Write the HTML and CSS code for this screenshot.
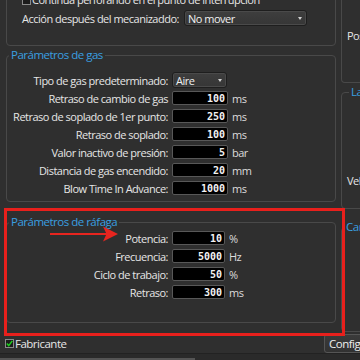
FILE: index.html
```html
<!DOCTYPE html>
<html>
<head>
<meta charset="UTF-8">
<link rel="stylesheet" href="styles.css">
</head>
<body>
<div class="window">
    <div class="columns">
        <div class="leftcol">
            <div class="group topgroup">
                <div class="checkrow"><span class="check"></span>Continúa perforando en el punto de interrupción</div>
                <div class="actionrow">
                    <span class="lbl">Acción después del mecanizaddo:</span>
                    <span class="combo wide">No mover<span class="arrow"></span></span>
                </div>
            </div>

            <fieldset class="group gas">
                <legend>Parámetros de gas</legend>
                <div class="form">
                    <span class="lbl">Tipo de gas predeterminado:</span><span class="combo">Aire<span class="arrow"></span></span><span></span>
                    <span class="lbl">Retraso de cambio de gas</span><input class="num" value="100"><span class="unit">ms</span>
                    <span class="lbl">Retraso de soplado de 1er punto:</span><input class="num" value="250"><span class="unit">ms</span>
                    <span class="lbl">Retraso de soplado:</span><input class="num" value="100"><span class="unit">ms</span>
                    <span class="lbl">Valor inactivo de presión:</span><input class="num" value="5"><span class="unit">bar</span>
                    <span class="lbl">Distancia de gas encendido:</span><input class="num" value="20"><span class="unit">mm</span>
                    <span class="lbl">Blow Time In Advance:</span><input class="num" value="1000"><span class="unit">ms</span>
                </div>
            </fieldset>

            <fieldset class="group burst">
                <legend>Parámetros de ráfaga</legend>
                <div class="form narrow">
                    <span class="lbl">Potencia:</span><input class="num" value="10"><span class="unit">%</span>
                    <span class="lbl">Frecuencia:</span><input class="num" value="5000"><span class="unit">Hz</span>
                    <span class="lbl">Ciclo de trabajo:</span><input class="num" value="50"><span class="unit">%</span>
                    <span class="lbl">Retraso:</span><input class="num" value="300"><span class="unit">ms</span>
                </div>
            </fieldset>
        </div>

        <div class="rightcol">
            <div class="group toppanel"><span class="side">Posición</span></div>
            <fieldset class="group lav">
                <legend>Lavado</legend>
                <span class="side">Velocidad</span>
            </fieldset>
            <fieldset class="group car">
                <legend>Carga</legend>
            </fieldset>
        </div>
    </div>

    <div class="bottomrow">
        <div class="fab"><span class="check on"><svg width="7" height="7" viewBox="0 0 7 7"><path d="M0.8 3.6 L2.7 5.6 L6.3 0.9" fill="none" stroke="#1ed21e" stroke-width="1.5"/></svg></span>Fabricante</div>
        <button class="btn">Configuración</button>
    </div>
    <div class="status"><span class="statusbar"></span></div>

    <div class="highlight"></div>
    <svg class="pointer" width="72" height="18" viewBox="0 0 72 18">
        <line x1="0" y1="9" x2="58" y2="9" stroke="#e8251f" stroke-width="2.2"/>
        <path d="M53 1.5 L68 9 L53 16.5 L56.5 9 Z" fill="#e8251f"/>
    </svg>
</div>
</body>
</html>
```

FILE: styles.css
```css
body {
    margin: 0;
    background-color: #2f2f2f;
    color: #e6e6e6;
    font-family: "Open Sans", "Noto Sans", sans-serif;
    font-size: 11px;
    letter-spacing: -0.5px;
    overflow: hidden;
}

.window {
    position: relative;
    width: 360px;
    height: 360px;
    overflow: hidden;
}

.columns {
    display: flex;
    height: 336px;
}

.leftcol {
    flex: none;
    width: 330px;
    margin-left: 6px;
}

.rightcol {
    flex: none;
    width: 90px;
    margin-left: 5px;
    display: flex;
    flex-direction: column;
}

.group {
    border: 1px solid #494949;
    border-radius: 4px;
    margin: 0;
    box-sizing: border-box;
}

fieldset.group {
    padding: 0;
    min-width: 0;
}

legend {
    color: #3a9fe0;
    margin-left: 2px;
    padding: 0 2px;
    line-height: 14px;
    font-size: 11.5px;
}

.lbl {
    white-space: nowrap;
}

/* top group, partly above the window */
.topgroup {
    margin-top: -12px;
    padding: 3px 0 17px 15px;
}

.checkrow {
    height: 16px;
    line-height: 16px;
    display: flex;
    align-items: center;
    white-space: nowrap;
}

.check {
    display: inline-flex;
    align-items: center;
    justify-content: center;
    width: 9px;
    height: 9px;
    box-sizing: border-box;
    border: 1px solid #8a8a8a;
    background-color: #1c1c1c;
    margin-right: 1px;
}

.actionrow {
    display: grid;
    grid-template-columns: 162px 123px;
    align-items: center;
    height: 20px;
}

.combo {
    position: relative;
    display: flex;
    align-items: center;
    box-sizing: border-box;
    height: 16px;
    width: 55px;
    padding-left: 3px;
    background: linear-gradient(#3e3e3e, #363636);
    border: 1px solid #1e1e1e;
    box-shadow: inset 0 0 0 1px #4a4a4a;
    border-radius: 3px;
    color: #f0f0f0;
}

.combo.wide {
    width: 123px;
}

.arrow {
    position: absolute;
    right: 4px;
    top: 6px;
    border-left: 2.5px solid transparent;
    border-right: 2.5px solid transparent;
    border-top: 3px solid #d0d0d0;
}

/* gas group */
.gas {
    margin-top: 2px;
    padding: 9px 0 4px 0 !important;
}

.burst {
    margin-top: 13px;
    padding: 0 0 21px 0 !important;
}

.form {
    display: grid;
    grid-template-columns: 161px 56px auto;
    column-gap: 4px;
    grid-auto-rows: 18px;
    align-items: center;
}

.form.narrow {
    grid-template-columns: 161px 53px auto;
}

.form .lbl {
    justify-self: end;
}

.num {
    box-sizing: border-box;
    width: 100%;
    height: 14px;
    margin: 0;
    padding: 0 2px 0 0;
    background-color: #000;
    border: 1px solid #585858;
    border-radius: 2px;
    color: #f2f2f2;
    font-family: "DejaVu Sans Mono", monospace;
    font-weight: bold;
    font-size: 10px;
    letter-spacing: 0;
    text-align: right;
    outline: none;
}

.unit {
    color: #dcdcdc;
}

/* right column */
.toppanel {
    margin-top: -6px;
    height: 89px;
    padding: 34px 0 0 5px;
    border-top: none;
}

.side {
    white-space: nowrap;
}

.lav {
    margin-top: 2px;
    height: 124px;
    padding: 74px 0 0 5px !important;
}

.car {
    margin-top: 11px;
    height: 112px;
}

/* bottom */
.bottomrow {
    display: flex;
    align-items: center;
    height: 18px;
    margin-top: -2px;
    padding-left: 5px;
}

.fab {
    flex: none;
    width: 319px;
    display: flex;
    align-items: center;
    font-size: 11.5px;
}

.check.on {
    margin-right: 1px;
}

.btn {
    flex: none;
    height: 19px;
    width: 80px;
    padding: 0 4px;
    text-align: left;
    background: linear-gradient(#3a3a3a, #323232);
    border: 1px solid #555;
    border-radius: 3px;
    color: #eee;
    font-family: "Open Sans", "Noto Sans", sans-serif;
    font-size: 11.5px;
    letter-spacing: -0.5px;
}

.status {
    margin-top: 1px;
    height: 7px;
    border-top: 1px solid #222;
    background-color: #2a2a2a;
    display: flex;
    align-items: flex-end;
}

.statusbar {
    width: 195px;
    height: 3px;
    background-color: #545454;
}

/* annotation */
.highlight {
    position: absolute;
    left: 4px;
    top: 208px;
    width: 341px;
    height: 128px;
    box-sizing: border-box;
    border: 3px solid #e8201c;
}

.pointer {
    position: absolute;
    left: 50px;
    top: 225px;
}
```
